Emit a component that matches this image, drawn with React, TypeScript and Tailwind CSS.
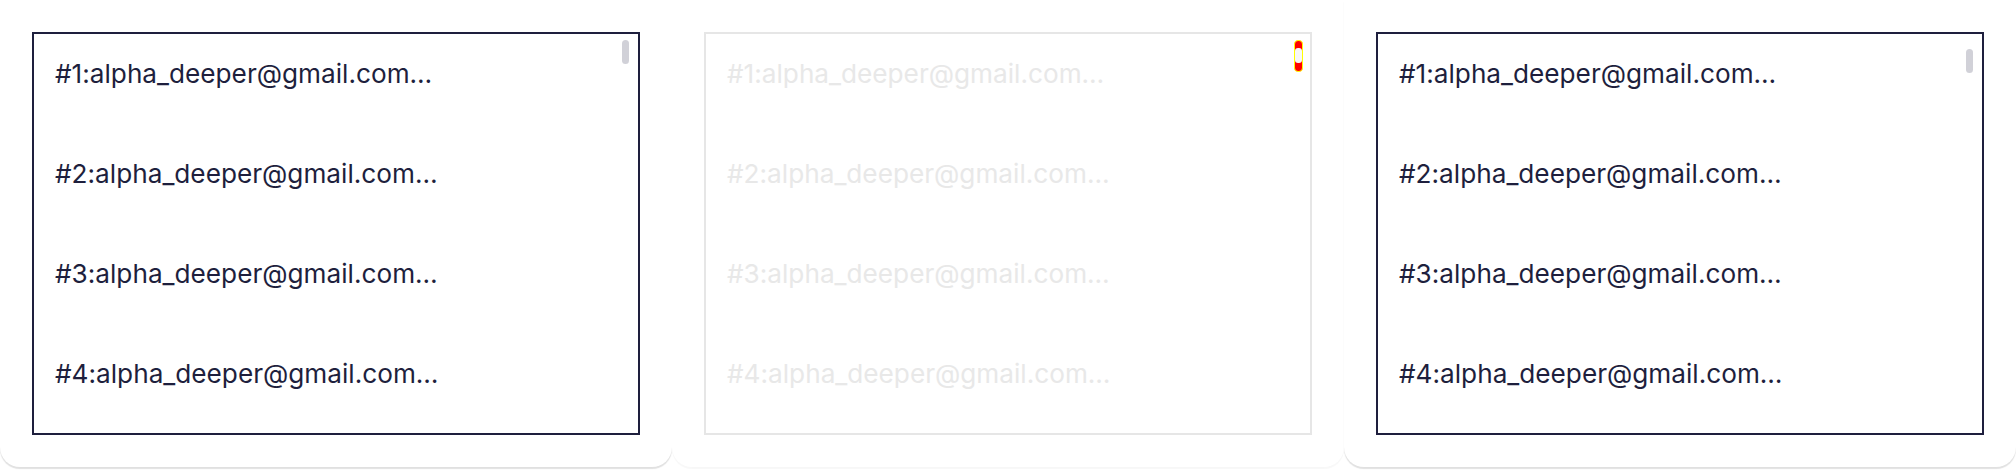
import React from "react";

const items = [1, 2, 3, 4];

function ListBox({ variant }: { variant: "active" | "disabled" | "focused" }) {
  const disabled = variant === "disabled";
  return (
    <div
      className={
        "relative h-[403px] w-full overflow-hidden border-2 bg-white " +
        (disabled ? "border-[#e6e6e6]" : "border-[#1e1f3d]")
      }
    >
      <ul className="flex flex-col pl-[21px] pt-[25px]">
        {items.map((n) => (
          <li
            key={n}
            className={
              "h-[100px] shrink-0 text-[26.2px] leading-[30px] " +
              (disabled ? "text-[#e8e8e8]" : "text-[#1e1f3d]")
            }
          >
            #{n}:alpha_deeper@gmail.com…
          </li>
        ))}
      </ul>
      {variant === "active" && (
        <div className="absolute right-[9px] top-[6px] h-[24px] w-[7px] rounded-full bg-[#d1d1d8]" />
      )}
      {variant === "focused" && (
        <div className="absolute right-[9px] top-[15px] h-[24px] w-[7px] rounded-full bg-[#d1d1d8]" />
      )}
      {disabled && (
        <div className="absolute right-[7px] top-[6px] h-[32px] w-[9px] rounded-[4px] border border-[#ffff00] bg-[#ff0000]">
          <div className="absolute left-0 right-0 top-[7px] h-[15px] rounded-[3px] bg-[#f7f7f7]" />
        </div>
      )}
    </div>
  );
}

function Card({
  variant,
  shadow,
}: {
  variant: "active" | "disabled" | "focused";
  shadow: string;
}) {
  return (
    <div className={"flex h-[467px] w-[672px] rounded-b-[20px] bg-white pb-[32px] pl-[32px] pr-[32px] pt-[32px] " + shadow}>
      <ListBox variant={variant} />
    </div>
  );
}

export default function App() {
  return (
    <div
      className="flex h-[470px] w-[2016px] items-start bg-white"
      style={{ fontFamily: "Inter, 'Noto Sans', sans-serif" }}
    >
      <Card variant="active" shadow="shadow-[0_2px_1px_rgba(0,0,0,0.12)]" />
      <Card variant="disabled" shadow="shadow-[0_2px_1px_rgba(0,0,0,0.03)]" />
      <Card variant="focused" shadow="shadow-[0_2px_1px_rgba(0,0,0,0.12)]" />
    </div>
  );
}
